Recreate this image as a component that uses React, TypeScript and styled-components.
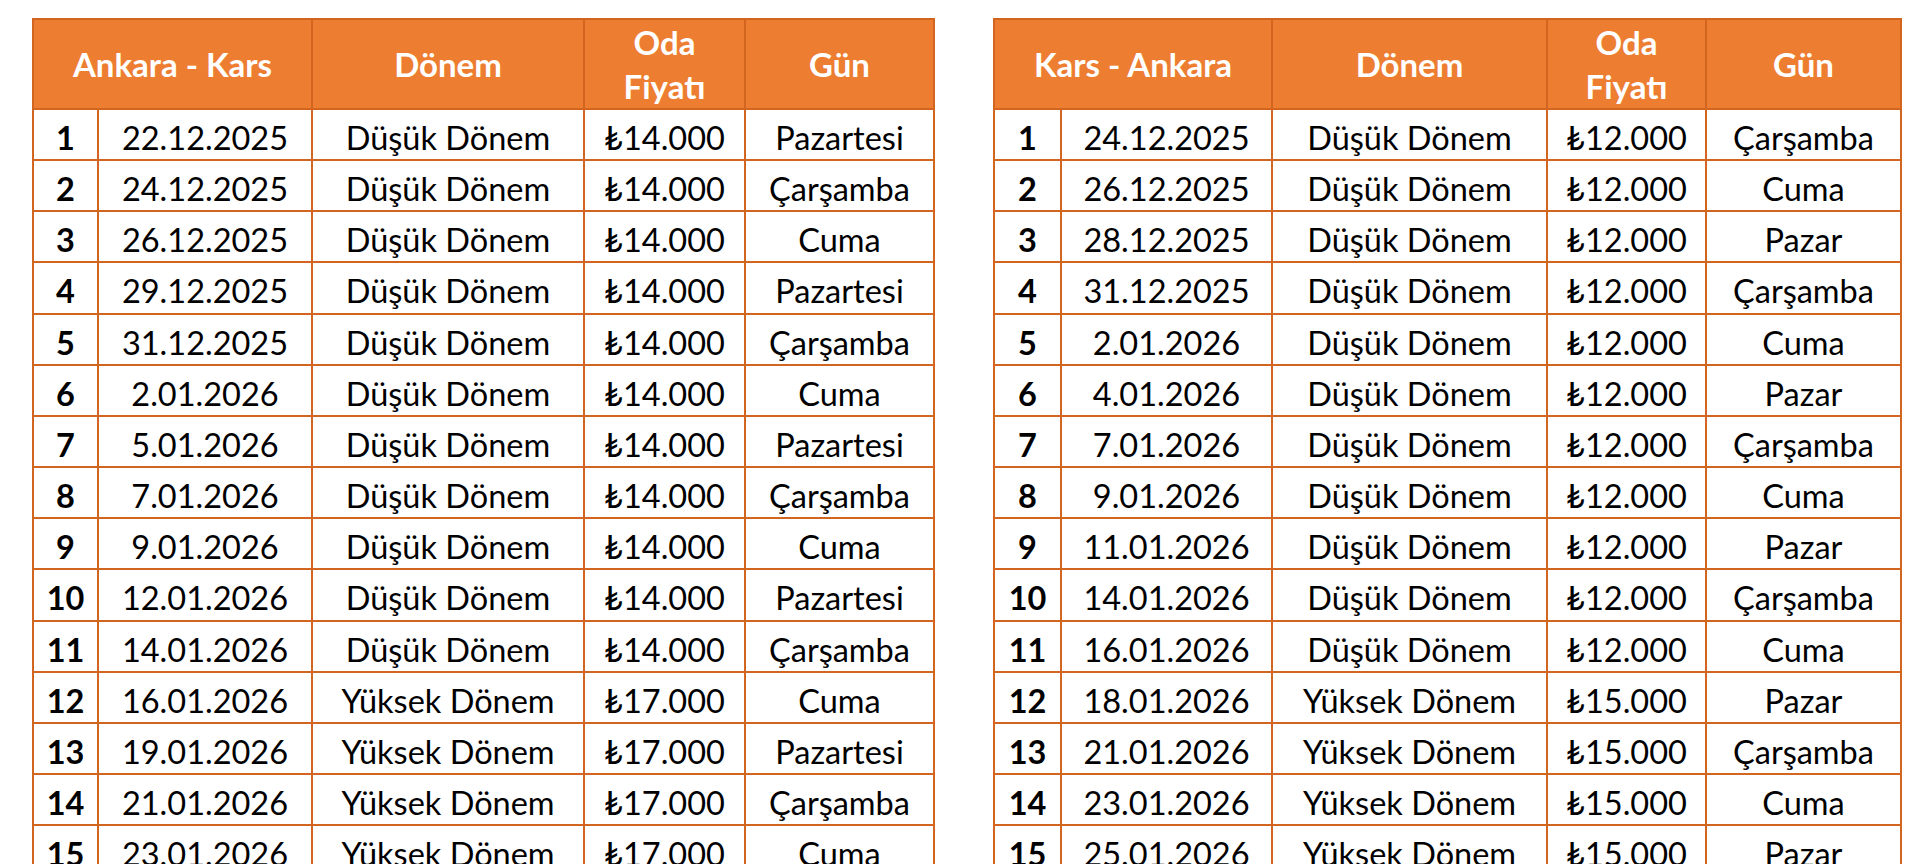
import React from "react";
import styled, { createGlobalStyle } from "styled-components";

const Global = createGlobalStyle`
  html, body { margin: 0; padding: 0; background: #fff; overflow: hidden; }
  body { font-family: Lato, "Open Sans", "DejaVu Sans", sans-serif; }
`;

const Page = styled.div`
  display: flex;
  align-items: flex-start;
  gap: 58px;
  padding: 18px 0 0 32px;
`;

const Grid = styled.div<{ $cols: string }>`
  display: grid;
  grid-template-columns: ${(p) => p.$cols};
  grid-auto-rows: 49.17px;
  grid-template-rows: 88px;
  gap: 2px;
  padding: 2px;
  background: #d2651f;
`;

const HeadCell = styled.div<{ $span?: number }>`
  grid-column: span ${(p) => p.$span ?? 1};
  background: #ed7d31;
  color: #fff;
  font-weight: 700;
  font-size: 33px;
  line-height: 44px;
  text-align: center;
  display: flex;
  align-items: center;
  justify-content: center;
`;

const Cell = styled.div<{ $bold?: boolean }>`
  background: #fff;
  color: #000;
  font-size: 32.5px;
  line-height: 32px;
  font-weight: ${(p) => (p.$bold ? 700 : 400)};
  text-align: center;
  padding-top: 12px;
  white-space: nowrap;
  overflow: hidden;
`;

type Row = [string, string, string, string];

const left: Row[] = [
  ["22.12.2025", "Düşük Dönem", "₺14.000", "Pazartesi"],
  ["24.12.2025", "Düşük Dönem", "₺14.000", "Çarşamba"],
  ["26.12.2025", "Düşük Dönem", "₺14.000", "Cuma"],
  ["29.12.2025", "Düşük Dönem", "₺14.000", "Pazartesi"],
  ["31.12.2025", "Düşük Dönem", "₺14.000", "Çarşamba"],
  ["2.01.2026", "Düşük Dönem", "₺14.000", "Cuma"],
  ["5.01.2026", "Düşük Dönem", "₺14.000", "Pazartesi"],
  ["7.01.2026", "Düşük Dönem", "₺14.000", "Çarşamba"],
  ["9.01.2026", "Düşük Dönem", "₺14.000", "Cuma"],
  ["12.01.2026", "Düşük Dönem", "₺14.000", "Pazartesi"],
  ["14.01.2026", "Düşük Dönem", "₺14.000", "Çarşamba"],
  ["16.01.2026", "Yüksek Dönem", "₺17.000", "Cuma"],
  ["19.01.2026", "Yüksek Dönem", "₺17.000", "Pazartesi"],
  ["21.01.2026", "Yüksek Dönem", "₺17.000", "Çarşamba"],
  ["23.01.2026", "Yüksek Dönem", "₺17.000", "Cuma"],
];

const right: Row[] = [
  ["24.12.2025", "Düşük Dönem", "₺12.000", "Çarşamba"],
  ["26.12.2025", "Düşük Dönem", "₺12.000", "Cuma"],
  ["28.12.2025", "Düşük Dönem", "₺12.000", "Pazar"],
  ["31.12.2025", "Düşük Dönem", "₺12.000", "Çarşamba"],
  ["2.01.2026", "Düşük Dönem", "₺12.000", "Cuma"],
  ["4.01.2026", "Düşük Dönem", "₺12.000", "Pazar"],
  ["7.01.2026", "Düşük Dönem", "₺12.000", "Çarşamba"],
  ["9.01.2026", "Düşük Dönem", "₺12.000", "Cuma"],
  ["11.01.2026", "Düşük Dönem", "₺12.000", "Pazar"],
  ["14.01.2026", "Düşük Dönem", "₺12.000", "Çarşamba"],
  ["16.01.2026", "Düşük Dönem", "₺12.000", "Cuma"],
  ["18.01.2026", "Yüksek Dönem", "₺15.000", "Pazar"],
  ["21.01.2026", "Yüksek Dönem", "₺15.000", "Çarşamba"],
  ["23.01.2026", "Yüksek Dönem", "₺15.000", "Cuma"],
  ["25.01.2026", "Yüksek Dönem", "₺15.000", "Pazar"],
];

function Schedule({ title, cols, rows }: { title: string; cols: string; rows: Row[] }) {
  return (
    <Grid $cols={cols}>
      <HeadCell $span={2}>{title}</HeadCell>
      <HeadCell>Dönem</HeadCell>
      <HeadCell>
        Oda
        <br />
        Fiyatı
      </HeadCell>
      <HeadCell>Gün</HeadCell>
      {rows.map((r, i) => (
        <React.Fragment key={i}>
          <Cell $bold>{i + 1}</Cell>
          <Cell>{r[0]}</Cell>
          <Cell>{r[1]}</Cell>
          <Cell>{r[2]}</Cell>
          <Cell>{r[3]}</Cell>
        </React.Fragment>
      ))}
    </Grid>
  );
}

export default function App() {
  return (
    <>
      <Global />
      <Page>
        <Schedule title="Ankara - Kars" cols="63px 212px 270px 159px 187px" rows={left} />
        <Schedule title="Kars - Ankara" cols="65px 209px 273px 157px 193px" rows={right} />
      </Page>
    </>
  );
}
